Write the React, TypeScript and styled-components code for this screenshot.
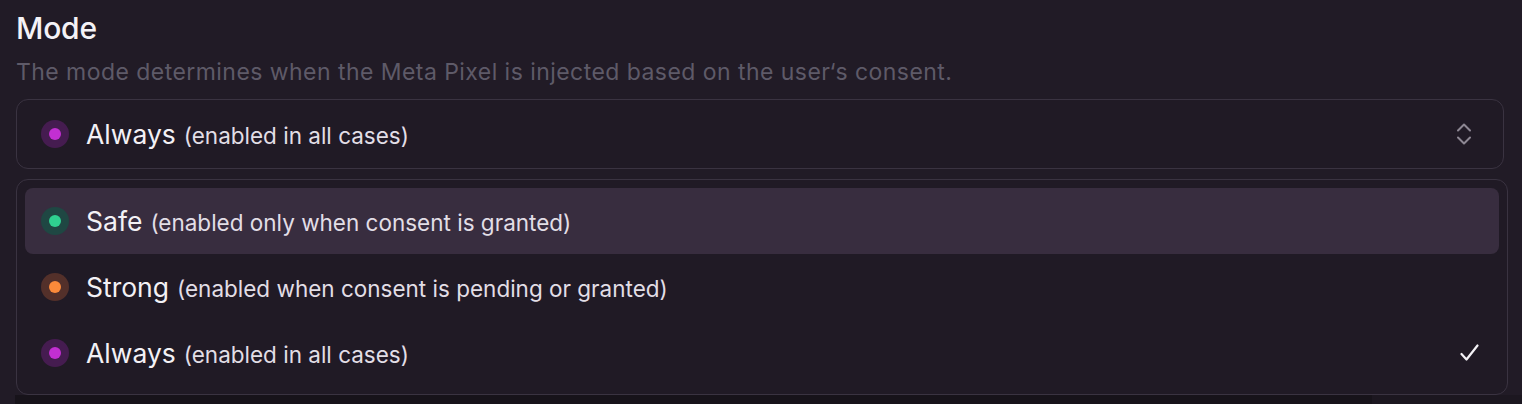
import React from "react";
import styled, { createGlobalStyle } from "styled-components";

const Global = createGlobalStyle`
  html, body { margin: 0; padding: 0; background: #211b26; }
  body { font-family: Inter, "Noto Sans", sans-serif; -webkit-font-smoothing: antialiased; }
`;

const Page = styled.div`
  width: 1522px;
  height: 404px;
  overflow: hidden;
  background: #211b26;
  display: flex;
  flex-direction: column;
`;

const Section = styled.div`
  padding: 10px 18px 0 16px;
  display: flex;
  flex-direction: column;
`;

const Title = styled.h2`
  margin: 0;
  font-size: 30px;
  line-height: 36px;
  font-weight: 500;
  color: #f4f2f6;
  letter-spacing: -0.2px;
`;

const Description = styled.p`
  margin: 11px 0 0;
  font-size: 23px;
  line-height: 30px;
  letter-spacing: 0.45px;
  color: #5e5a68;
`;

const SelectBox = styled.div`
  margin-top: 12px;
  height: 70px;
  box-sizing: border-box;
  border: 1.5px solid #3a3341;
  border-radius: 12px;
  background: #201a25;
  display: flex;
  align-items: center;
  padding: 0 32px 0 24px;
`;

const Menu = styled.div`
  margin: 10px -4px 0 0;
  box-sizing: border-box;
  border: 1.5px solid #3a3341;
  border-radius: 12px;
  background: #201a25;
  padding: 8px;
  display: flex;
  flex-direction: column;
`;

const Item = styled.div<{ $active?: boolean }>`
  height: 66px;
  display: flex;
  align-items: center;
  padding: 0 20px 0 16px;
  border-radius: 8px;
  background: ${(p) => (p.$active ? "#382d3f" : "transparent")};
`;

const Dot = styled.span<{ $color: string; $halo: string }>`
  width: 28px;
  height: 28px;
  border-radius: 50%;
  background: ${(p) => p.$halo};
  display: flex;
  align-items: center;
  justify-content: center;
  flex: none;
  &::after {
    content: "";
    width: 12px;
    height: 12px;
    border-radius: 50%;
    background: ${(p) => p.$color};
  }
`;

const Label = styled.span`
  margin-left: 17px;
  font-size: 26.5px;
  color: #f3f1f5;
  white-space: nowrap;
  flex: 1;
`;

const Sub = styled.span`
  font-size: 22.5px;
  color: #e2dee6;
  margin-left: 8px;
`;

const Below = styled.div`
  flex: 1;
  margin-left: 15px;
  background: #17131a;
  display: flex;
`;

const BelowRight = styled.div`
  margin-left: auto;
  width: 150px;
  background: #1c1720;
`;

const modes = [
  { key: "safe", name: "Safe", desc: "(enabled only when consent is granted)", color: "#2fd090", halo: "#1f4743" },
  { key: "strong", name: "Strong", desc: "(enabled when consent is pending or granted)", color: "#fb8a3a", halo: "#53302a" },
  { key: "always", name: "Always", desc: "(enabled in all cases)", color: "#c22fd2", halo: "#451c50" },
];

const Chevrons = () => (
  <svg width="14" height="22" viewBox="0 0 14 22" fill="none" stroke="#8d8793" strokeWidth="2" strokeLinecap="round" strokeLinejoin="round">
    <path d="M1 7.5 7 1.5 13 7.5" />
    <path d="M1 14.5 7 20.5 13 14.5" />
  </svg>
);

const Check = () => (
  <svg width="19" height="18" viewBox="0 0 19 18" fill="none" stroke="#f4f2f6" strokeWidth="2.2" strokeLinecap="round" strokeLinejoin="round">
    <path d="M1.5 10 6.5 15.5 17.5 1.5" />
  </svg>
);

export default function App() {
  const selected = "always";
  const current = modes.find((m) => m.key === selected)!;
  return (
    <Page>
      <Global />
      <Section>
        <Title>Mode</Title>
        <Description>The mode determines when the Meta Pixel is injected based on the user‘s consent.</Description>
        <SelectBox>
          <Dot $color={current.color} $halo={current.halo} />
          <Label>
            {current.name}
            <Sub>{current.desc}</Sub>
          </Label>
          <Chevrons />
        </SelectBox>
        <Menu>
          {modes.map((m, i) => (
            <Item key={m.key} $active={i === 0}>
              <Dot $color={m.color} $halo={m.halo} />
              <Label>
                {m.name}
                <Sub>{m.desc}</Sub>
              </Label>
              {m.key === selected && <Check />}
            </Item>
          ))}
        </Menu>
      </Section>
      <Below>
        <BelowRight />
      </Below>
    </Page>
  );
}
